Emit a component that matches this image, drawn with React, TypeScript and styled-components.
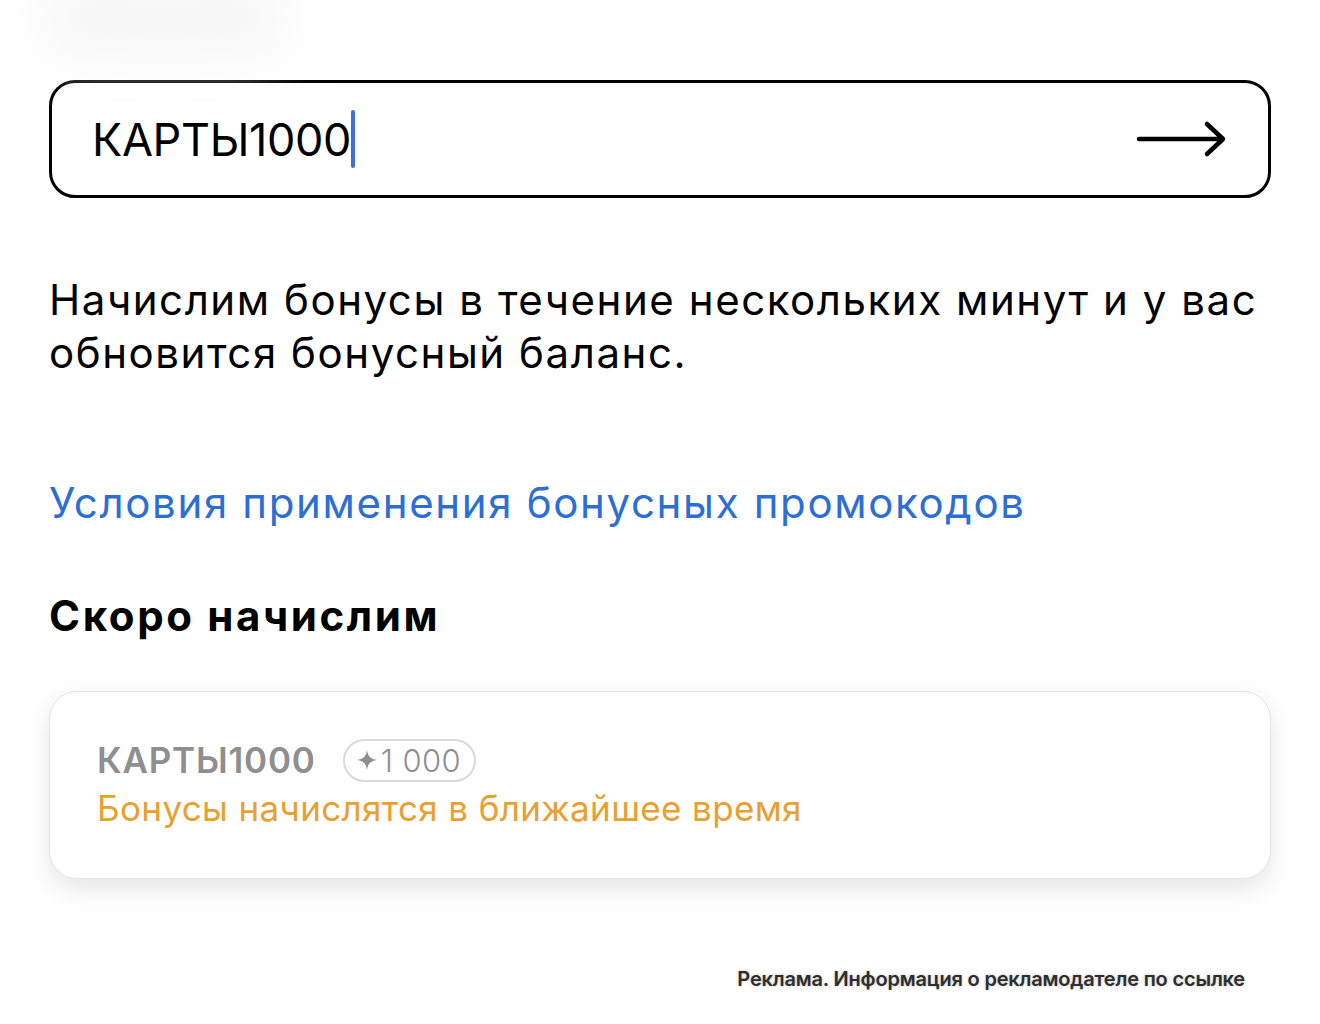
import React from 'react';
import styled, { createGlobalStyle } from 'styled-components';

const GlobalStyle = createGlobalStyle`
  html, body {
    margin: 0;
    padding: 0;
    background: #ffffff;
  }
  body {
    font-family: Inter, "Noto Sans", "Liberation Sans", sans-serif;
    color: #000000;
  }
`;

const Page = styled.div`
  width: 1320px;
  min-height: 1024px;
  box-sizing: border-box;
  padding: 0 49px;
  display: flex;
  flex-direction: column;
  overflow: hidden;
`;

const TopStrip = styled.div`
  height: 80px;
  display: flex;
  align-items: flex-start;
`;

// soft grey smear left over from the header above
const Haze = styled.div`
  width: 250px;
  height: 80px;
  margin: -22px 0 0 -10px;
  border-radius: 40px;
  background: #f6f6f6;
  filter: blur(26px);
`;

const PromoField = styled.label`
  height: 118px;
  box-sizing: border-box;
  border: 3px solid #000;
  border-radius: 26px;
  display: flex;
  align-items: center;
  padding: 0 40px 0 40px;
`;

const FieldText = styled.div`
  flex: 1;
  display: flex;
  align-items: center;
  font-size: 45px;
  letter-spacing: -0.35px;
  line-height: 1;
`;

const Caret = styled.span`
  display: inline-block;
  width: 4px;
  height: 58px;
  border-radius: 2px;
  background: #3d6fe3;
  margin-left: 0;
`;

const SubmitArrow = () => (
  <svg width="92" height="40" viewBox="0 0 92 40" fill="none">
    <path d="M3 20H87M71 5L87 20L71 35" stroke="#000" strokeWidth="4.5" strokeLinecap="round" strokeLinejoin="round" />
  </svg>
);

const Note = styled.p`
  margin: 75px 0 0;
  font-size: 42px;
  line-height: 53px;
  letter-spacing: 1.55px;
`;

const RulesLink = styled.a`
  margin-top: 97px;
  font-size: 42px;
  line-height: 53px;
  letter-spacing: 1.65px;
  color: #2c6fd4;
  text-decoration: none;
`;

const SectionTitle = styled.h2`
  margin: 62px 0 0;
  font-size: 42px;
  line-height: 50px;
  font-weight: 700;
  letter-spacing: 2.6px;
`;

const PendingCard = styled.div`
  margin-top: 50px;
  height: 188px;
  box-sizing: border-box;
  border-radius: 28px;
  background: #fff;
  border: 1px solid #e4e4e4;
  box-shadow: 0 10px 26px rgba(0, 0, 0, 0.1);
  padding: 46px 47px 0;
  display: flex;
  flex-direction: column;
`;

const CodeRow = styled.div`
  display: flex;
  align-items: center;
  gap: 27px;
`;

const CodeName = styled.span`
  font-size: 35px;
  line-height: 44px;
  font-weight: 600;
  color: #8f8f8f;
  letter-spacing: 0.8px;
`;

const BonusBadge = styled.span`
  display: inline-flex;
  align-items: center;
  height: 43px;
  box-sizing: border-box;
  padding: 0 13px 0 11px;
  border: 2.5px solid #dadada;
  border-radius: 22px;
  font-size: 31px;
  font-weight: 300;
  color: #8f8f8f;
  letter-spacing: 0.4px;
  gap: 3px;
`;

const Sparkle = () => (
  <svg width="22" height="22" viewBox="0 0 22 22">
    <path d="M11 1C12 7.5 14.5 10 21 11C14.5 12 12 14.5 11 21C10 14.5 7.5 12 1 11C7.5 10 10 7.5 11 1Z" fill="#8f8f8f" />
  </svg>
);

const StatusLine = styled.span`
  margin-top: 4px;
  font-size: 35px;
  line-height: 44px;
  color: #e9a02f;
  letter-spacing: 0.37px;
`;

const AdNote = styled.div`
  margin-top: 88px;
  align-self: flex-end;
  margin-right: 26px;
  font-size: 20px;
  font-weight: 600;
  letter-spacing: -0.18px;
  color: #2e2e2e;
  text-shadow: 0 0 3px rgba(0, 0, 0, 0.25);
`;

export default function App() {
  return (
    <>
      <GlobalStyle />
      <Page>
        <TopStrip>
          <Haze />
        </TopStrip>
        <PromoField>
          <FieldText>
            КАРТЫ1000
            <Caret />
          </FieldText>
          <SubmitArrow />
        </PromoField>
        <Note>
          Начислим бонусы в течение нескольких минут и у вас обновится бонусный баланс.
        </Note>
        <RulesLink href="#">Условия применения бонусных промокодов</RulesLink>
        <SectionTitle>Скоро начислим</SectionTitle>
        <PendingCard>
          <CodeRow>
            <CodeName>КАРТЫ1000</CodeName>
            <BonusBadge>
              <Sparkle />1 000
            </BonusBadge>
          </CodeRow>
          <StatusLine>Бонусы начислятся в ближайшее время</StatusLine>
        </PendingCard>
        <AdNote>Реклама. Информация о рекламодателе по ссылке</AdNote>
      </Page>
    </>
  );
}
